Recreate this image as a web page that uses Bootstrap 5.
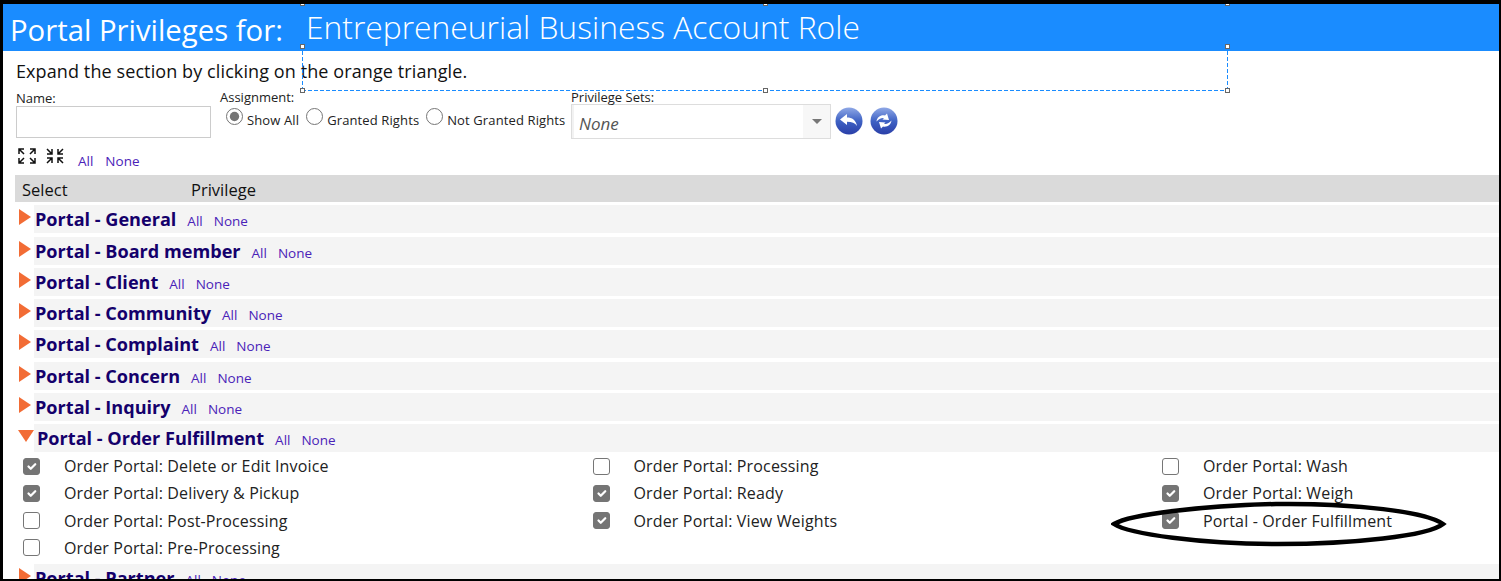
<!DOCTYPE html>
<html lang="en">
<head>
    <meta charset="UTF-8">
    <meta name="viewport" content="width=device-width, initial-scale=1.0">
    <title>Portal Privileges</title>
    <link rel="stylesheet" href="https://cdn.jsdelivr.net/npm/bootstrap@5.3.6/dist/css/bootstrap.min.css">
    <style>
        html, body { height: 100%; overflow: hidden; background: #fff; }
        body { font-family: "Open Sans", "Liberation Sans", sans-serif; color: #222; }
        .shot-frame { position: relative; height: 581px; overflow: hidden; background: #fff; border: solid #000; border-width: 4px 2px 2px 3px; }
        .page-head { height: 47px; background: #1a8cff; color: #fff; }
        .head-label { width: 303px; padding: 5px 0 0 7px; font-size: 29.3px; white-space: nowrap; }
        .head-role { font-weight: 300; font-size: 31.8px; margin-top: -1px; white-space: nowrap; }
        .hint-text { font-size: 18px; letter-spacing: .1px; padding: 8px 0 0 13px; height: 34px; line-height: 24px; color: #111; }
        .filter-bar { height: 55px; font-size: 13px; }
        .filter-name { width: 204px; margin-left: 13px; padding-top: 5px; }
        .filter-name label { display: block; line-height: 16px; margin-bottom: 0; }
        .filter-input { display: block; width: 195px; height: 32px; border: 1px solid #ccc; border-radius: 0; padding: 0 6px; }
        .filter-assign { width: 351px; padding-top: 4px; }
        .filter-assign > div:first-child { line-height: 16px; }
        .radio-line { margin-top: 3px; padding-left: 6px; }
        .radio-line label { margin: 4px 7px 0 4px; line-height: 16px; letter-spacing: .12px; white-space: nowrap; }
        .form-check-input { width: 17px; height: 17px; margin: 0; border: 1px solid #767676; flex: none; }
        .form-check-input[type=checkbox] { border-radius: 3px; }
        .form-check-input:checked { background-color: #757575; border-color: #757575; }
        .form-check-input:checked[type=radio] { background-color: #fff; background-image: url("data:image/svg+xml,%3csvg xmlns='http://www.w3.org/2000/svg' viewBox='-4 -4 8 8'%3e%3ccircle r='2.5' fill='%23757575'/%3e%3c/svg%3e"); }
        .filter-sets { padding-top: 5px; }
        .filter-sets > div:first-child { line-height: 14px; }
        .sets-box { width: 260px; height: 35px; border: 1px solid #ddd; box-shadow: inset 2px 0 0 #f2f2f2; }
        .sets-value { font-style: italic; color: #555; font-size: 17px; padding: 7px 0 0 7px; line-height: 24px; }
        .sets-caret { width: 27px; background: #f7f7f7; }
        .sets-caret i { border: solid transparent; border-width: 5px 5px 0; border-top-color: #777; }
        .round-group { padding-bottom: 5px; }
        .round-btn { width: 28px; height: 28px; margin-left: 4px; display: block; }
        .round-btn + .round-btn { margin-left: 7px; }
        .tool-line { height: 35px; padding: 8px 0 0 15px; }
        .tool-line svg { display: block; margin-right: 10px; }
        .tool-line svg + svg { margin-right: 14px; }
        .tool-line .mini-link { margin: 3px 12px 0 0; }
        .mini-link { color: #4a22b8; font-size: 13.5px; text-decoration: none; }
        .table-head { margin-left: 12px; height: 27px; background: #dadada; font-size: 16.5px; line-height: 30px; padding-left: 7px; color: #111; }
        .table-head span { display: block; width: 169px; }
        .section-row { height: 28px; margin-top: 3.3px; }
        .section-tri { width: 0; height: 0; margin: 4px 3px 0 16px; border: solid transparent; border-width: 8px 0 8px 12px; border-left-color: #f26c35; flex: none; }
        .section-tri.is-open { border-width: 12px 8px 0; border-top-color: #f26c35; border-left-color: transparent; margin: 6px 0 0 15px; }
        .section-bar { flex: 1; background: #f4f4f4; line-height: 29px; padding-left: 1px; white-space: nowrap; }
        .section-tri.is-open + .section-bar { padding-left: 3px; }
        .section-bar b { color: #14006b; font-size: 18.1px; margin-right: 11px; }
        .section-bar .mini-link { margin-right: 11px; }
        .open-rows { display: grid; grid-template-columns: 569.5px 569.5px 1fr; margin-bottom: -.5px; padding-left: 20px; }
        .priv-line { height: 27.3px; font-size: 16px; letter-spacing: .15px; color: #222; }
        .priv-line span { margin-left: 24px; }
        /* selection frame from the editor, lies over the page */
        .sel-box { position: absolute; left: 299px; top: -1px; width: 926px; height: 88px; pointer-events: none;
            background:
                repeating-linear-gradient(90deg, #1a8cff 0 4px, transparent 4px 6px) left top / 100% 1px no-repeat,
                repeating-linear-gradient(90deg, #1a8cff 0 4px, transparent 4px 6px) left bottom / 100% 1px no-repeat,
                repeating-linear-gradient(0deg, #1a8cff 0 4px, transparent 4px 6px) left top / 1px 100% no-repeat,
                repeating-linear-gradient(0deg, #1a8cff 0 4px, transparent 4px 6px) right top / 1px 100% no-repeat; }
        .sel-handle { position: absolute; width: 5px; height: 5px; background: #fff; border: 1px solid #666; }
        .sel-top { top: -2px; }
        .sel-mid { top: 41px; }
        .sel-bot { bottom: -2px; }
        .sel-l { left: -2px; }
        .sel-c { left: 461px; }
        .sel-r { right: -2px; }
        .ring-mark { position: absolute; left: 1108px; top: 497px; }
    </style>
</head>
<body>
    <div class="shot-frame">
        <div class="page-head d-flex">
            <div class="head-label">Portal Privileges for:</div>
            <div class="head-role">Entrepreneurial Business Account Role</div>
        </div>
        <div class="hint-text">Expand the section by clicking on the orange triangle.</div>

        <form class="filter-bar d-flex">
            <div class="filter-name">
                <label for="nameFilter">Name:</label>
                <input type="text" class="filter-input" id="nameFilter">
            </div>
            <div class="filter-assign">
                <div>Assignment:</div>
                <div class="radio-line d-flex align-items-start">
                    <input class="form-check-input" type="radio" name="assign" id="a1" checked>
                    <label for="a1">Show All</label>
                    <input class="form-check-input" type="radio" name="assign" id="a2">
                    <label for="a2">Granted Rights</label>
                    <input class="form-check-input" type="radio" name="assign" id="a3">
                    <label for="a3">Not Granted Rights</label>
                </div>
            </div>
            <div class="filter-sets">
                <div>Privilege Sets:</div>
                <div class="sets-box d-flex">
                    <div class="sets-value flex-grow-1">None</div>
                    <div class="sets-caret d-flex align-items-center justify-content-center"><i></i></div>
                </div>
            </div>
            <div class="round-group d-flex align-items-end">
                <svg class="round-btn" viewBox="0 0 28 28">
                    <defs><linearGradient id="bl" x1="0" y1="0" x2="0" y2="1"><stop offset="0" stop-color="#8fa8e6"/><stop offset=".5" stop-color="#3f62c4"/><stop offset="1" stop-color="#2a3fa8"/></linearGradient></defs>
                    <circle cx="14" cy="14" r="13.5" fill="url(#bl)"/>
                    <path d="M5 12.5 12 7v3.500c5 0 9 2.500 10 8.500-2-3-5-4.200-10-4.200V18z" fill="#fff"/>
                </svg>
                <svg class="round-btn" viewBox="0 0 28 28">
                    <circle cx="14" cy="14" r="13.5" fill="url(#bl)"/>
                    <path d="M6.500 14.500C7 10 11 7.500 15 8.500l2-2 2 6.500-6.500-.5 1.500-1.500c-3-.5-5 1-7.500 3.500zM21.500 13.500c-.5 4.500-4.500 7-8.500 6l-2 2-2-6.500 6.500.5-1.500 1.500c3 .5 5-1 7.500-3.500z" fill="#fff"/>
                </svg>
            </div>
        </form>

        <div class="tool-line d-flex">
            <svg width="18" height="16" viewBox="0 0 18 16" fill="none" stroke="#111" stroke-width="1.500">
                <path d="M1 6V1h5M1 1l5 5M17 6V1h-5M17 1l-5 5M1 10v5h5M1 15l5-5M17 10v5h-5M17 15l-5-5"/>
            </svg>
            <svg width="18" height="16" viewBox="0 0 18 16" fill="none" stroke="#111" stroke-width="1.500">
                <path d="M6 1v5H1M6 6 1 1M12 1v5h5M12 6l5-5M6 15v-5H1M6 10l-5 5M12 15v-5h5M12 10l5 5"/>
            </svg>
            <a href="#" class="mini-link">All</a>
            <a href="#" class="mini-link">None</a>
        </div>

        <div class="table-head d-flex"><span>Select</span>Privilege</div>

        <div class="section-row d-flex"><i class="section-tri"></i><div class="section-bar"><b>Portal - General</b><a href="#" class="mini-link">All</a><a href="#" class="mini-link">None</a></div></div>
        <div class="section-row d-flex"><i class="section-tri"></i><div class="section-bar"><b>Portal - Board member</b><a href="#" class="mini-link">All</a><a href="#" class="mini-link">None</a></div></div>
        <div class="section-row d-flex"><i class="section-tri"></i><div class="section-bar"><b>Portal - Client</b><a href="#" class="mini-link">All</a><a href="#" class="mini-link">None</a></div></div>
        <div class="section-row d-flex"><i class="section-tri"></i><div class="section-bar"><b>Portal - Community</b><a href="#" class="mini-link">All</a><a href="#" class="mini-link">None</a></div></div>
        <div class="section-row d-flex"><i class="section-tri"></i><div class="section-bar"><b>Portal - Complaint</b><a href="#" class="mini-link">All</a><a href="#" class="mini-link">None</a></div></div>
        <div class="section-row d-flex"><i class="section-tri"></i><div class="section-bar"><b>Portal - Concern</b><a href="#" class="mini-link">All</a><a href="#" class="mini-link">None</a></div></div>
        <div class="section-row d-flex"><i class="section-tri"></i><div class="section-bar"><b>Portal - Inquiry</b><a href="#" class="mini-link">All</a><a href="#" class="mini-link">None</a></div></div>
        <div class="section-row d-flex"><i class="section-tri is-open"></i><div class="section-bar"><b>Portal - Order Fulfillment</b><a href="#" class="mini-link">All</a><a href="#" class="mini-link">None</a></div></div>

        <div class="open-rows">
            <div>
                <div class="priv-line d-flex align-items-center"><input class="form-check-input" type="checkbox" checked><span>Order Portal: Delete or Edit Invoice</span></div>
                <div class="priv-line d-flex align-items-center"><input class="form-check-input" type="checkbox" checked><span>Order Portal: Delivery &amp; Pickup</span></div>
                <div class="priv-line d-flex align-items-center"><input class="form-check-input" type="checkbox"><span>Order Portal: Post-Processing</span></div>
                <div class="priv-line d-flex align-items-center"><input class="form-check-input" type="checkbox"><span>Order Portal: Pre-Processing</span></div>
            </div>
            <div>
                <div class="priv-line d-flex align-items-center"><input class="form-check-input" type="checkbox"><span>Order Portal: Processing</span></div>
                <div class="priv-line d-flex align-items-center"><input class="form-check-input" type="checkbox" checked><span>Order Portal: Ready</span></div>
                <div class="priv-line d-flex align-items-center"><input class="form-check-input" type="checkbox" checked><span>Order Portal: View Weights</span></div>
            </div>
            <div>
                <div class="priv-line d-flex align-items-center"><input class="form-check-input" type="checkbox"><span>Order Portal: Wash</span></div>
                <div class="priv-line d-flex align-items-center"><input class="form-check-input" type="checkbox" checked><span>Order Portal: Weigh</span></div>
                <div class="priv-line d-flex align-items-center"><input class="form-check-input" type="checkbox" checked><span>Portal - Order Fulfillment</span></div>
            </div>
        </div>

        <div class="section-row d-flex"><i class="section-tri"></i><div class="section-bar"><b>Portal - Partner</b><a href="#" class="mini-link">All</a><a href="#" class="mini-link">None</a></div></div>

        <div class="sel-box">
            <i class="sel-handle sel-top sel-l"></i>
            <i class="sel-handle sel-top sel-c"></i>
            <i class="sel-handle sel-top sel-r"></i>
            <i class="sel-handle sel-mid sel-l"></i>
            <i class="sel-handle sel-mid sel-r"></i>
            <i class="sel-handle sel-bot sel-l"></i>
            <i class="sel-handle sel-bot sel-c"></i>
            <i class="sel-handle sel-bot sel-r"></i>
        </div>
        <svg class="ring-mark" width="336" height="46" viewBox="0 0 336 46">
            <path d="M3 23C20 13 90 5 165 3c80-1 150 8 167 20-15 12-90 20-165 20C90 43 18 33 3 23z" fill="none" stroke="#000" stroke-width="4.500"/>
        </svg>
    </div>

    <script src="https://cdn.jsdelivr.net/npm/bootstrap@5.3.6/dist/js/bootstrap.bundle.min.js"></script>
</body>
</html>
